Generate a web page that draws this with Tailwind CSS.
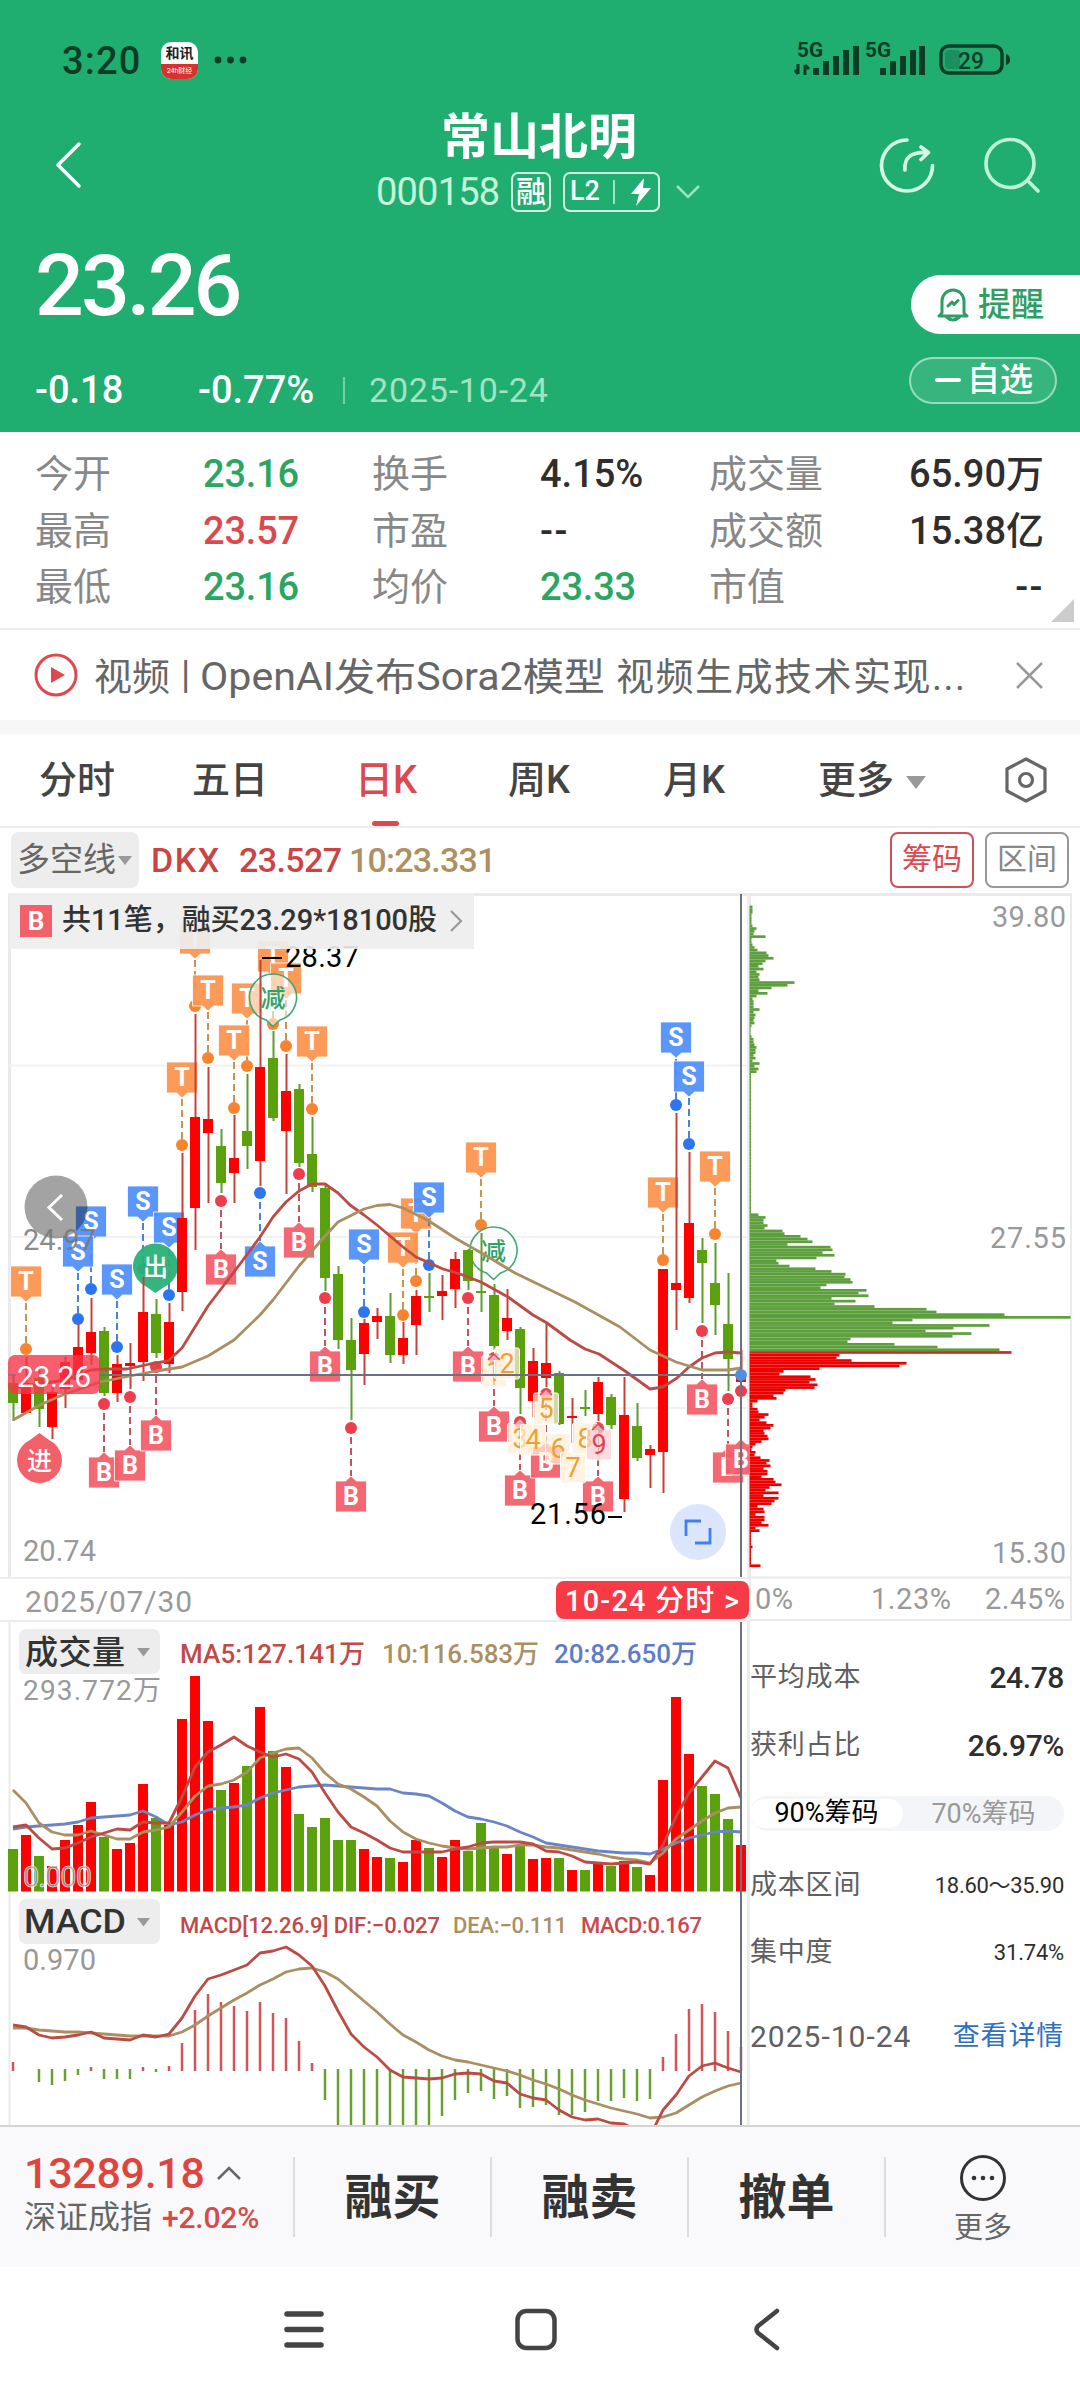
<!DOCTYPE html>
<html lang="zh-CN">
<head>
  <meta charset="UTF-8" />
  <meta name="viewport" content="width=device-width, initial-scale=1" />
  <title>常山北明 000158</title>
  <script src="https://cdn.jsdelivr.net/npm/@tailwindcss/browser@4"></script>
</head>
<body class="w-[1080px] h-[2400px] overflow-hidden bg-white text-[#2e2e2e] font-['Roboto','Noto_Sans_CJK_SC',sans-serif]">
  <!-- Header -->
  <header class="h-[432px] bg-[#20ad70] text-white">
    <div class="h-[111px] pt-[9px] pl-[62px] pr-[68px] flex items-center text-[#0b3d26]">
      <span class="w-[99px] pt-[2px] text-[38px] tracking-[1.200px] font-medium">3:20</span>
      <div class="w-[37px] h-[37px] rounded-[10px] overflow-hidden bg-white flex flex-col items-center">
        <span class="h-[22px] leading-[22px] text-[14px] font-bold text-[#222]">和讯</span>
        <span class="w-full h-[15px] bg-[#d8322f] text-white text-[7px] leading-[14px] text-center">24h财经</span>
      </div>
      <svg class="ml-[15px]" width="36" height="10" fill="#0b3d26"><circle cx="5" cy="5" r="3.4" /><circle cx="17.500" cy="5" r="3.4" /><circle cx="30" cy="5" r="3.4" /></svg>
      <svg class="ml-auto" width="218" height="58" viewBox="795 31 218 58" fill="#0b3d26">
        <g font-family="Roboto" font-weight="700" font-size="20">
          <text x="798" y="57" textLength="26" lengthAdjust="spacingAndGlyphs">5G</text>
          <text x="866" y="57" textLength="26" lengthAdjust="spacingAndGlyphs">5G</text>
        </g>
        <path d="M799 64v10M799 74l-3-4M806 75V65M806 65l4 4" stroke="#0b3d26" stroke-width="3" fill="none" />
        <path d="M814 68h6v7h-6zM824 61h6v14h-6zM834 56h6v19h-6zM844 50h6v25h-6zM854 46h6v29h-6z" />
        <path d="M881 68h6v7h-6zM891 61h6v14h-6zM901 56h6v19h-6zM911 50h6v25h-6zM920 46h6v29h-6z" />
        <rect x="942" y="46" width="61" height="27" rx="8" fill="none" stroke="#0b3d26" stroke-width="3.500" />
        <rect x="946" y="50" width="15" height="19" rx="4" fill="#0b3d26" opacity=".25" />
        <path d="M1007 54q4 1 4 5.500t-4 5.500z" />
        <text x="959" y="68.500" font-family="Roboto" font-weight="500" font-size="24" textLength="26" lengthAdjust="spacingAndGlyphs">29</text>
      </svg>
    </div>

    <div class="h-[104px] pl-[50px] pr-[38px] flex items-center">
      <svg class="mt-1" width="36" height="52" fill="none" stroke="#fff" stroke-width="3.500" stroke-linecap="round" stroke-linejoin="round"><path d="M29 5 8 26l21 21" /></svg>
      <div class="flex-1 pl-[100px] pt-[6px]">
        <h1 class="w-[580px] h-[50px] leading-[48px] pl-[255px] text-[49px] font-bold">常山北明</h1>
        <div class="w-[580px] h-[54px] pl-[190px] pt-[1px] flex items-center">
          <span class="w-[135px] text-[38px] leading-[40px] tracking-[-.8px] text-[#c6f4da]">000158</span>
          <span class="w-[40px] h-[40px] rounded-[7px] border-2 border-white/80 text-[30px] leading-[35px] text-center font-medium">融</span>
          <span class="ml-[12px] w-[97px] h-[40px] rounded-[7px] border-2 border-white/80 flex items-center pl-[5px]">
            <b class="font-medium text-[27px] w-[43px]">L2</b>
            <i class="w-[1.500px] h-[24px] bg-white/60"></i>
            <svg class="ml-[15px]" width="22" height="30" fill="#fff"><path d="M14 1 1 17h8L6 29 21 11h-8z" /></svg>
          </span>
          <svg class="ml-[15px]" width="26" height="16" fill="none" stroke="#9fe0c0" stroke-width="2.500"><path d="m2 2 11 11L24 2" /></svg>
        </div>
      </div>
      <svg class="shrink-0 mt-1" width="166" height="62" viewBox="876 134 166 62" fill="none" stroke="#d5f8e5" stroke-width="3.700" stroke-linecap="round" stroke-linejoin="round">
        <path d="M907 140A25.500 25.500 0 1 0 932.500 165.500" />
        <path d="M905 170c-1-12 5-18 22-17.500M921 147l7.500 5.500-7.500 7" />
        <circle cx="1010" cy="163.500" r="24" stroke="#bdf2d6" />
        <path d="m1029 182 9 9" stroke="#bdf2d6" />
      </svg>
    </div>

    <div class="h-[139px] pl-[35px] flex justify-between items-center">
      <span class="pt-[3px] text-[86px] leading-[100px] font-medium tracking-[-3px]">23.26</span>
      <div class="mt-10 w-[169px] h-[59px] rounded-l-full bg-white text-[#2f9e66] flex items-center pl-[26px]">
        <svg width="32" height="34" fill="none" stroke="#2f9e66" stroke-width="3" stroke-linecap="round" stroke-linejoin="round">
          <path d="M5 25V13a11 11 0 0 1 22 0v12l3 3H2zM10 29.500q6 5 12 0M11 18l4-4 2 2.500 4-4" />
        </svg>
        <span class="ml-[9px] text-[33px] leading-[40px] font-medium">提醒</span>
      </div>
    </div>

    <div class="h-[72px] pl-[35px] pr-[23px] flex items-center">
      <span class="w-[163px] text-[38px] font-medium">-0.18</span>
      <span class="w-[145px] text-[38px] font-medium">-0.77%</span>
      <i class="w-[2px] h-[27px] bg-white/40"></i>
      <span class="ml-[24px] text-[34px] tracking-[.8px] text-[#a3e2c2]">2025-10-24</span>
      <div class="ml-auto -mt-5 w-[148px] h-[47px] rounded-full border-2 border-white/50 bg-white/10 flex items-center pl-[24px]">
        <i class="w-[26px] h-[3.500px] rounded bg-white"></i>
        <span class="ml-[6px] text-[33px] leading-[40px] font-medium">自选</span>
      </div>
    </div>
  </header>

  <!-- Quote figures -->
  <section class="relative h-[198px] pt-[14px] pl-[35px] pr-[36px] border-b-2 border-[#ededed] text-[38px] leading-[56.500px] font-medium">
    <div class="grid grid-cols-[168px_169px_168px_169px_1fr_auto] text-[#888]">
      <span class="font-normal">今开</span><span class="text-[#2aa562] tracking-[-.2px]">23.16</span><span class="font-normal">换手</span><span class="text-[#2e2e2e]">4.15%</span><span class="font-normal">成交量</span><span class="text-[#2e2e2e] text-right">65.90万</span>
      <span class="font-normal">最高</span><span class="text-[#d94a50] tracking-[-.2px]">23.57</span><span class="font-normal">市盈</span><span class="text-[#2e2e2e] tracking-[1.500px]">--</span><span class="font-normal">成交额</span><span class="text-[#2e2e2e] text-right">15.38亿</span>
      <span class="font-normal">最低</span><span class="text-[#2aa562] tracking-[-.2px]">23.16</span><span class="font-normal">均价</span><span class="text-[#2aa562] tracking-[-.2px]">23.33</span><span class="font-normal">市值</span><span class="text-[#2e2e2e] text-right tracking-[1.500px]">--</span>
    </div>
    <svg class="absolute right-[6px] bottom-[6px]" width="23" height="23" fill="#ccc"><path d="M23 0v23H0z" /></svg>
  </section>

  <!-- News -->
  <section class="h-[90px] pl-[34px] pr-[36px] flex items-center">
    <svg width="44" height="44"><circle cx="22" cy="22" r="20" fill="none" stroke="#dc4a50" stroke-width="3" /><path d="M17 14v16l14-8z" fill="#dc4a50" /></svg>
    <svg class="block ml-[16px]" width="890" height="56" fill="#666" font-size="38">
      <text x="0" y="43" textLength="76">视频</text>
      <text x="87" y="41">|</text>
      <text x="106" y="43" textLength="405" lengthAdjust="spacingAndGlyphs">OpenAI发布Sora2模型</text>
      <text x="522" y="43" textLength="349">视频生成技术实现...</text>
    </svg>
    <svg class="ml-auto" width="29" height="29" stroke="#999" stroke-width="2.500"><path d="m2 2 25 25M27 2 2 27" /></svg>
  </section>
  <div class="h-[14px] bg-[#f7f7f7]"></div>

  <!-- Period tabs -->
  <nav class="h-[94px] pl-[39px] pr-[31px] flex items-center border-b-2 border-[#ededed] text-[38px] font-medium text-[#444]">
    <span class="w-[153px]">分时</span>
    <span class="w-[163px]">五日</span>
    <span class="relative w-[153px] h-full leading-[92px] text-[#dc4a50]">日K<i class="absolute left-[17px] bottom-0 w-[27px] h-[5px] rounded bg-[#dc4a50]"></i></span>
    <span class="w-[155px]">周K</span>
    <span class="w-[155px]">月K</span>
    <span>更多</span>
    <svg class="ml-[12px] mt-1" width="20" height="13" fill="#999"><path d="M0 0h20L10 13z" /></svg>
    <svg class="ml-auto" width="46" height="48" fill="none" stroke="#666" stroke-width="3.200" stroke-linejoin="round"><path d="M23 3 42 13v22L23 45 4 35V13z" /><circle cx="23" cy="24" r="6.500" /></svg>
  </nav>

  <!-- Indicator row -->
  <div class="h-[65px] pt-[4px] pl-[11px] pr-[11px] flex text-[34px] leading-[56px]">
    <div class="w-[128px] h-[56px] rounded-[8px] bg-[#ededed] pl-[6px] text-[33px] text-[#666] flex items-center">多空线<svg class="ml-[2px]" width="14" height="9" fill="#999"><path d="M0 0h14L7 9z" /></svg></div>
    <span class="ml-[12px] w-[88px] font-medium tracking-[1.500px] text-[#cb4444]">DKX</span>
    <span class="w-[110px] tracking-[-.6px] font-medium text-[#cb4444]">23.527</span>
    <span class="tracking-[-.8px] font-medium text-[#ae9060]">10:23.331</span>
    <span class="ml-auto w-[84px] h-[56px] rounded-[8px] border-2 border-[#cc5055] text-[#dc4a50] text-[30px] leading-[50px] text-center">筹码</span>
    <span class="ml-[11px] w-[84px] h-[56px] rounded-[8px] border-2 border-[#999] text-[#888] text-[30px] leading-[50px] text-center">区间</span>
  </div>

  <!-- Charts -->
  <main class="h-[1232px] flex overflow-hidden">
    <div class="w-[749px] shrink-0">
      <div class="relative">
        <svg id="price" class="block" width="749" height="684" viewBox="0 893 749 684"></svg>
        <div class="absolute left-[9px] top-0 w-[465px] h-[56px] bg-[#eee]/92 flex items-center pl-[11px]">
          <b class="w-[32px] h-[32px] bg-[#f2606a] text-white text-[26px] leading-[32px] text-center font-bold">B</b>
          <svg class="ml-[10px]" width="376" height="44"><text x="0" y="31" font-size="29" fill="#333" font-weight="500" textLength="375">共11笔，融买23.29*18100股</text></svg>
          <svg class="ml-[11px]" width="14" height="24" fill="none" stroke="#999" stroke-width="2.200"><path d="m2 2 10 10L2 22" /></svg>
        </div>
      </div>
      <div class="h-[45px] border-y-2 border-[#ededed] pl-[25px] flex items-center justify-between">
        <svg width="170" height="40"><text x="0" y="32" font-size="30" fill="#999" textLength="167">2025/07/30</text></svg>
        <div class="w-[193px] h-[38px] rounded-[8px] bg-[#f63b47] pl-[9px]">
          <svg class="block" width="180" height="38"><text x="0" y="30" font-size="29" font-weight="500" fill="#fff" textLength="174">10-24 分时 &gt;</text></svg>
        </div>
      </div>
      <svg id="volume" class="block" width="749" height="272" viewBox="0 1622 749 272"></svg>
      <svg id="macd" class="block" width="749" height="231" viewBox="0 1894 749 231"></svg>
    </div>

    <!-- Chip distribution -->
    <aside class="flex-1 pr-[8px]">
      <svg id="chips" class="block" width="323" height="728" viewBox="749 893 323 728"></svg>
      <div class="h-[504px] pt-[22px] pr-[8px] border-l border-[#eee] text-[27px] tracking-[.8px] text-[#606060]">
        <div class="h-[68px] flex items-center justify-between">平均成本<span class="text-[30px] tracking-[-.4px] text-[#2e2e2e] font-medium">24.78</span></div>
        <div class="h-[68px] flex items-center justify-between">获利占比<span class="text-[30px] tracking-[-.4px] text-[#2e2e2e] font-medium">26.97%</span></div>
        <div class="mt-[17px] h-[35px] rounded-full bg-[#f4f5f8] flex items-center text-[27px] leading-[30px] tracking-normal text-center">
          <span class="w-[153px] h-[29px] rounded-full bg-white text-black leading-[28px]">90%筹码</span>
          <span class="flex-1 text-[#999]">70%筹码</span>
        </div>
        <div class="mt-[20px] h-[68px] flex items-center justify-between">成本区间<span class="text-[22px] tracking-[-.3px] text-[#2e2e2e]">18.60～35.90</span></div>
        <div class="h-[67px] flex items-center justify-between">集中度<span class="text-[22px] tracking-[-.2px] text-[#2e2e2e]">31.74%</span></div>
        <div class="mt-[14px] h-[72px] flex items-center justify-between"><span class="text-[30px] tracking-[1px]">2025-10-24</span><span class="text-[#2f70c0]">查看详情</span></div>
      </div>
    </aside>
  </main>

  <!-- Trade bar -->
  <footer class="h-[142px] border-t-2 border-[#d4d4d6] bg-[#f9f9fb] flex">
    <div class="w-[293px] pl-[24px] pt-[23px]">
      <div class="flex items-center h-[46px] text-[43px] text-[#e0443e] font-medium tracking-[-.3px]">13289.18
        <svg class="ml-[12px]" width="24" height="14" fill="none" stroke="#666" stroke-width="2.500"><path d="m1 13 11-11 11 11" /></svg>
      </div>
      <div class="flex items-center h-[42px] text-[32px] text-[#666]">深证成指<span class="ml-[10px] text-[30px] font-medium tracking-[-.2px] text-[#d84a48]">+2.02%</span></div>
    </div>
    <div class="my-[30px] w-[197px] border-l-2 border-[#dcdcdf] text-[48px] leading-[82px] font-bold text-[#333] text-center">融买</div>
    <div class="my-[30px] w-[197px] border-l-2 border-[#dcdcdf] text-[48px] leading-[82px] font-bold text-[#333] text-center">融卖</div>
    <div class="my-[30px] w-[197px] border-l-2 border-[#dcdcdf] text-[48px] leading-[82px] font-bold text-[#333] text-center">撤单</div>
    <div class="my-[30px] flex-1 border-l-2 border-[#dcdcdf] flex flex-col items-center">
      <svg class="-mt-[4px] shrink-0" width="50" height="50"><circle cx="25" cy="25" r="21.500" fill="none" stroke="#333" stroke-width="3" /><g fill="#333"><circle cx="16" cy="25" r="2.300" /><circle cx="25" cy="25" r="2.300" /><circle cx="34" cy="25" r="2.300" /></g></svg>
      <span class="mt-[3px] text-[29px] leading-[44px] text-[#666]">更多</span>
    </div>
  </footer>

  <!-- System navigation -->
  <div class="h-[133px] pt-[36px]">
    <svg class="block mx-auto" width="520" height="54" viewBox="280 2303 520 54" fill="none" stroke="#444" stroke-linecap="round" stroke-linejoin="round">
      <path d="M287 2314h34M287 2329.500h34M287 2345h34" stroke-width="5.500" />
      <rect x="517.500" y="2311" width="37" height="37" rx="9" stroke-width="4.500" />
      <path d="m777 2311-19 15q-3 3.500 0 7l19 15" stroke-width="4.500" />
    </svg>
  </div>

  <script>
    const RED = '#fe0000', GREEN = '#5ba00d', UP = '#c8403a', DOWN = '#5f9a2c';
    const LINE_RED = '#bd4b45', LINE_TAN = '#ab8f62', LINE_BLUE = '#6a85c6';
    const X = (i) => 13 + 13 * i;

    // colour, high, body top, body bottom, low
    const candles = [
      ['g',1375,1383,1403,1421],['r',1357,1383,1413,1413],['g',1370,1378,1409,1427],['r',1385,1392,1427,1439],['r',1357,1362,1389,1408],
      ['r',1323,1347,1380,1382],['r',1298,1332,1353,1365],['g',1327,1331,1393,1396],['r',1355,1364,1393,1402],['r',1343,1363,1366,1389],
      ['r',1277,1312,1362,1381],['g',1299,1314,1353,1358],['r',1303,1322,1364,1373],['r',1153,1218,1292,1311],['r',1014,1117,1208,1250],
      ['r',1067,1119,1133,1203],['g',1129,1146,1183,1193],['r',1115,1158,1173,1203],['g',1074,1131,1146,1169],['r',960,1067,1161,1186],
      ['g',1031,1058,1118,1121],['r',1054,1091,1131,1194],['g',1084,1089,1163,1167],['g',1117,1154,1187,1192],['g',1183,1188,1278,1291],
      ['g',1266,1274,1340,1349],['g',1318,1340,1370,1420],['r',1319,1323,1354,1385],['r',1308,1316,1322,1339],['g',1293,1316,1355,1363],
      ['r',1322,1338,1355,1364],['r',1290,1296,1325,1355],['g',1273,1296,1298,1312],['r',1275,1291,1296,1320],['r',1252,1259,1289,1308],
      ['g',1249,1250,1281,1290],['g',1233,1291,1293,1312],['g',1284,1295,1346,1350],['r',1289,1318,1331,1340],['g',1327,1329,1388,1414],
      ['r',1348,1361,1401,1417],['r',1322,1363,1378,1387],['g',1371,1373,1424,1425],['r',1398,1416,1418,1443],['g',1390,1407,1409,1416],
      ['r',1377,1382,1414,1421],['g',1394,1397,1425,1429],['r',1377,1415,1499,1512],['g',1403,1426,1458,1461],['r',1445,1449,1455,1488],
      ['r',1269,1269,1452,1493],['r',1113,1283,1290,1330],['r',1152,1223,1298,1303],['g',1238,1250,1263,1323],['g',1243,1283,1305,1335],
      ['g',1273,1324,1359,1391],['r',1350,1375,1382,1382],
    ];

    const line = (pts, color, w = 2.8) =>
      `<polyline points="${pts.map((p) => p.join(',')).join(' ')}" fill="none" stroke="${color}" stroke-width="${w}" stroke-linejoin="round"/>`;
    const series = (ys, color) => line(ys.map((y, i) => [X(i), y]), color);
    const text = (x, y, s, size, fill, len, extra = '') =>
      `<text x="${x}" y="${y}" font-size="${size}" fill="${fill}" textLength="${len}" ${extra}>${s}</text>`;

    const TAG = { T: '#fc9650', S: '#5290fb', B: '#f2606a' };
    const DOT = { T: '#f88430', S: '#2b76f0', B: '#ee3d4c' };

    // tag above its candle, pointing down
    function tagDown(kind, i, top) {
      const x = X(i), dash = kind === 'T' ? '#cf9150' : '#4a83d6';
      return `<path d="M${x} ${top + 37}V${top + 78}" stroke="${dash}" stroke-width="2" stroke-dasharray="7 4"/>
        <circle cx="${x}" cy="${top + 83}" r="6" fill="${DOT[kind]}"/>
        <path d="M${x - 15.5} ${top}h31v31h-10l-5.5 5-5.5-5h-10z" fill="${TAG[kind]}" fill-opacity=".95" stroke="#fff" stroke-opacity=".8"/>
        <text x="${x}" y="${top + 24}" font-size="25" font-weight="700" fill="#fff" text-anchor="middle">${kind}</text>`;
    }
    // tag below its candle, pointing up
    function tagUp(kind, i, dot) {
      const x = X(i), dash = kind === 'B' ? '#bf5560' : '#4a83d6';
      return `<path d="M${x} ${dot + 9}V${dot + 48}" stroke="${dash}" stroke-width="2" stroke-dasharray="7 4"/>
        <circle cx="${x}" cy="${dot}" r="6" fill="${DOT[kind]}"/>
        <path d="M${x - 15.5} ${dot + 84}h31v-31h-10l-5.5-5-5.5 5h-10z" fill="${TAG[kind]}" fill-opacity=".95" stroke="#fff" stroke-opacity=".8"/>
        <text x="${x}" y="${dot + 77}" font-size="25" font-weight="700" fill="#fff" text-anchor="middle">${kind}</text>`;
    }
    function bubble(x, y, s) {
      return `<path d="M${x - 7} ${y + 22.5}A23.5 23.5 0 1 1 ${x + 7} ${y + 22.5}L${x} ${y + 29}z" fill="#fff" fill-opacity=".55" stroke="#3fa873" stroke-width="1.6"/>
        <text x="${x}" y="${y + 9}" font-size="25" fill="#2fa268" font-weight="500" text-anchor="middle">${s}</text>`;
    }
    function count(x, y, s, hot) {
      return `<rect x="${x - 12.5}" y="${y - 15}" width="25" height="31" rx="2" fill="${hot ? '#fbcfd3' : '#fff0da'}" fill-opacity=".72" stroke="#fff"/>
        <text x="${x}" y="${y + 10}" font-size="27" fill="${hot ? '#dc4455' : '#efa033'}" text-anchor="middle">${s}</text>`;
    }

    let p = '<path d="M8 894.500H749M9.500 894V1577" stroke="#eaeaea" stroke-width="3"/><path d="M9 1065.500H749M9 1237H749M9 1408H749" stroke="#f2f2f2" stroke-width="2"/><path d="M748 894V1577" stroke="#eee" stroke-width="2"/>';
    p += [['T',13,1062],['T',14,923],['T',15,975],['T',18,983],['T',17,1025],['T',19,941],['T',21,963],['T',23,1026],['T',1,1266],
      ['S',6,1206],['S',5,1236],['S',8,1264],['S',10,1186],['S',12,1212],['S',27,1229],['T',31,1198],['T',30,1232],['S',32,1182],
      ['T',36,1142],['T',50,1177],['S',51,1022],['S',52,1061],['T',54,1151]].map(([k, i, y]) => k === 'T' && i === 19 ? tagDown(k, 20, y) : tagDown(k, i, y)).join('');
    p += [['B',7,1404],['B',9,1397],['B',11,1367],['B',16,1201],['S',19,1193],['B',22,1174],['B',24,1298],['B',26,1428],['B',35,1298],['B',37,1358],
      ['B',39,1422],['B',41,1394],['B',45,1428],['B',53,1331],['B',55,1399],['B',56,1391]].map(([k, i, y]) => tagUp(k, i, y)).join('');
    p += bubble(273, 997.5, '减') + bubble(493.5, 1250.5, '减');
    p += '<path d="M146 1286.500A22.500 22.500 0 1 1 165 1286.500L155.500 1293z" fill="#2bb077" fill-opacity=".95"/>' + text(143, 1276, '出', 25, '#fff', 25, 'font-weight="500"');
    p += '<path d="M30 1440A22.500 22.500 0 1 0 49 1440L39.500 1433z" fill="#f2606a"/>' + text(27, 1470, '进', 25, '#fff', 25, 'font-weight="500"');
    p += candles.map(([c, hi, top, bot, lo], i) =>
      `<path d="M${X(i) + .5} ${hi}V${lo}" stroke="${c === 'r' ? UP : DOWN}" stroke-width="2"/><rect x="${X(i) - 5}" y="${top}" width="10" height="${bot - top}" fill="${c === 'r' ? RED : GREEN}"/>`).join('');
    p += [[494,1371,'1'],[507,1363,'2'],[520,1438,'3'],[533,1439,'4'],[546,1408,'5'],[558,1448,'6'],[573,1467,'7'],[585,1438,'8']].map((a) => count(...a)).join('') + count(599, 1444, '9', true);
    p += [[494,1355],[520,1419],[546,1390],[598,1425]].map(([x, y]) => `<path d="M${x - 6} ${y + 5}l6-6 6 6" fill="#f4a5ab" stroke="#c45460" stroke-width="1.5"/>`).join('');
    p += line([[13,1388],[39,1384],[65,1380],[91,1370],[108,1369],[127,1369],[150,1364],[168,1361],[182,1348],[195,1327],[208,1306],[221,1289],[240,1264],[260,1237],[273,1217],[286,1202],[299,1191],[312,1184],[325,1184],[338,1193],[350,1205],[364,1215],[377,1225],[403,1247],[416,1257],[443,1269],[460,1274],[481,1282],[508,1297],[533,1315],[547,1323],[570,1340],[585,1349],[599,1354],[625,1371],[650,1389],[663,1387],[677,1378],[689,1367],[702,1358],[715,1353],[728,1352],[741,1353]], LINE_RED);
    p += line([[13,1420],[40,1405],[60,1396],[100,1382],[125,1377],[156,1371],[182,1367],[208,1356],[234,1340],[260,1315],[273,1300],[299,1266],[325,1236],[338,1222],[364,1209],[377,1205.5],[390,1204.5],[403,1208],[429,1221],[455,1238],[485,1255],[515,1273],[575,1302],[620,1327],[650,1350],[676,1362],[702,1370],[728,1370],[741,1368]], LINE_TAN);
    p += '<path d="M262 958h20M608 1517h14" stroke="#000" stroke-width="2"/>' + text(285, 967, '28.37', 29, '#000', 74) + text(530, 1524, '21.56', 29, '#000', 76);
    p += '<circle cx="56" cy="1207" r="31.500" fill="#000" fill-opacity=".36"/><path d="m62 1195-13 12.500 13 12.500" fill="none" stroke="#fff" stroke-width="3"/>';
    p += text(23, 1250, '24.97', 29, '#777', 73, 'fill-opacity=".85"') + text(23, 1561, '20.74', 29, '#999', 73);
    p += '<rect x="8" y="1355" width="92" height="39" rx="7" fill="#f8364a" fill-opacity=".8"/>' + text(17, 1387, '23.26', 30, '#fff', 74);
    p += '<path d="M100 1375H741M741 894V1577" stroke="#6b7180" stroke-width="2"/><path d="M8 1375H16" stroke="#6b7180" stroke-width="1"/><circle cx="741" cy="1375" r="6" fill="#4e90dd"/>';
    p += '<circle cx="698" cy="1532" r="28" fill="#dbe6fd"/><path d="M686 1536v-15h15M710 1528v15h-15" fill="none" stroke="#4080e8" stroke-width="2.800"/>';
    document.getElementById('price').innerHTML = p;

    // volume: tops of the bars, coloured as the candles
    const volTop = [1849,1835,1856,1866,1840,1825,1802,1837,1849,1843,1784,1818,1825,1719,1676,1721,1790,1783,1766,1707,1751,1767,1814,1827,1818,1840,1840,1849,1857,1858,1862,1840,1848,1857,1840,1851,1823,1846,1854,1846,1859,1858,1858,1870,1870,1864,1866,1861,1867,1875,1780,1697,1754,1786,1794,1819,1845];
    let v = '<path d="M9.500 1622V1894M748 1622V1894" stroke="#eaeaea" stroke-width="2"/><rect x="19" y="1629" width="141" height="45" rx="7" fill="#ededed"/><path d="M137 1648h13l-6.500 8.500z" fill="#999"/>';
    v += text(25, 1664, '成交量', 33, '#333', 100, 'font-weight="500"') + text(23, 1700, '293.772万', 28, '#999', 138);
    v += text(180, 1663, 'MA5:127.141万', 26, '#c04a48', 185, 'font-weight="500"') + text(382, 1663, '10:116.583万', 26, '#ab8f62', 157, 'font-weight="500"') + text(554, 1663, '20:82.650万', 26, '#5e7cc6', 143, 'font-weight="500"');
    v += volTop.map((y, i) => `<rect x="${X(i) - 5}" y="${y}" width="10" height="${1891.5 - y}" fill="${candles[i][0] === 'r' ? RED : GREEN}"/>`).join('');
    v += series([1829,1827,1826,1825,1824,1822,1818,1817,1816,1815,1811,1817,1825,1822,1815,1810,1808,1807,1805,1798,1793,1790,1787,1786,1785,1786,1787,1788,1789,1789,1793,1794,1796,1803,1811,1817,1819,1822,1826,1832,1837,1843,1845,1847,1849,1851,1852,1853,1853,1854,1849,1843,1838,1835,1832,1831,1832], LINE_BLUE);
    v += series([1790,1803,1823,1832,1835,1835,1831,1835,1839,1839,1832,1830,1827,1812,1796,1786,1784,1780,1772,1758,1753,1749,1748,1758,1773,1784,1789,1797,1806,1821,1832,1839,1843,1846,1848,1849,1848,1847,1847,1845,1845,1847,1848,1850,1852,1854,1857,1859,1860,1863,1853,1839,1830,1821,1813,1808,1807], LINE_TAN);
    v += series([1827,1825,1838,1849,1848,1843,1837,1833,1829,1830,1822,1823,1823,1797,1767,1752,1745,1737,1746,1752,1757,1754,1759,1772,1793,1812,1827,1833,1840,1848,1852,1852,1852,1852,1849,1847,1843,1842,1842,1842,1844,1851,1852,1856,1862,1863,1864,1863,1862,1864,1845,1817,1793,1777,1761,1768,1798], LINE_RED);
    v += text(23, 1887, '0.000', 29, '#999', 69, 'fill-opacity=".8" stroke="#fff" stroke-width=".6"');
    v += '<path d="M741 1622V1894" stroke="#6b7180" stroke-width="2"/>';
    document.getElementById('volume').innerHTML = v;

    // macd: far end of each stick, 0 for none
    const sticks = [2062,0,2082,2085,2081,2075,2067,2079,2079,2079,2067,2072,2066,2043,2010,1994,2002,2006,2011,2002,2013,2018,2041,2063,2100,2125,2125,2125,2125,2125,2125,2125,2125,2116,2100,2093,2091,2099,2096,2108,2107,2105,2115,2115,2112,2101,2101,2098,2101,2099,2057,2034,2009,2004,2012,2031,2047];
    let m = '<path d="M9.500 1894V2125M748 1894V2125" stroke="#eaeaea" stroke-width="2"/><rect x="19" y="1899" width="141" height="45" rx="7" fill="#ededed"/><path d="M137 1918h13l-6.500 8.500z" fill="#999"/>';
    m += text(24, 1933, 'MACD', 33, '#333', 102, 'font-weight="500" lengthAdjust="spacingAndGlyphs"') + text(23, 1970, '0.970', 29, '#999', 73);
    m += text(180, 1933, 'MACD[12.26.9] DIF:−0.027', 22, '#c04a48', 260, 'font-weight="500"') + text(453, 1933, 'DEA:−0.111', 22, '#ab8f62', 114, 'font-weight="500"') + text(581, 1933, 'MACD:0.167', 22, '#c84a4c', 121, 'font-weight="500"');
    m += sticks.map((y, i) => !y ? '' : `<path d="M${X(i)} ${y < 2070 ? 2071 : 2069}V${y}" stroke="${y < 2070 ? '#d4545a' : '#6aa032'}" stroke-width="2.5"/>`).join('');
    m += series([2028,2028,2030,2031,2032,2032,2033,2034,2035,2036,2036,2036,2036,2032,2025,2016,2008,2000,1993,1985,1979,1972,1969,1968,1972,1979,1990,2001,2012,2024,2035,2042,2050,2056,2060,2062,2065,2068,2071,2075,2080,2084,2089,2095,2100,2104,2108,2111,2114,2118,2117,2113,2105,2097,2091,2086,2083], LINE_TAN);
    m += series([2025,2027,2035,2038,2037,2035,2032,2038,2039,2040,2035,2037,2034,2018,1996,1979,1975,1970,1965,1953,1951,1947,1955,1966,1986,2011,2034,2047,2057,2070,2077,2078,2079,2078,2074,2073,2074,2081,2083,2094,2098,2100,2110,2117,2120,2119,2123,2124,2130,2136,2110,2095,2076,2066,2063,2068,2072], LINE_RED);
    m += '<path d="M741 1894V2125" stroke="#6b7180" stroke-width="2"/>';
    document.getElementById('macd').innerHTML = m;

    // chip histogram, one row per 2.7px of price
    const chips = [3,3,3,2,2,2,2,3,7,5,4,16,2,2,3,5,8,17,19,24,16,13,9,14,7,10,9,10,45,38,22,9,18,7,3,4,4,4,10,4,6,5,4,5,2,1,1,1,2,4,4,5,7,6,6,4,6,3,10,5,9,7,
      ...Array(52).fill(1.5),
      9,16,14,14,18,15,33,35,51,58,63,38,81,83,73,85,67,27,29,40,66,82,96,95,101,103,77,71,117,109,119,82,106,85,125,177,187,255,321,163,143,240,204,176,222,203,101,98,145,188,250,
      262,90,87,102,157,150,70,34,30,61,66,60,68,65,36,34,24,27,8,3,3,8,9,19,15,10,17,24,21,14,15,18,19,12,6,3,2,6,5,11,20,17,21,14,18,18,12,24,26,32,20,16,29,14,29,25,22,8,14,15,6,15,15,12,19,6,10,1.5,1.5,1.5,1.5,1.5,3,1.5,1.5,1.5,1.5,1.5,1.5,11];
    let h = '<path d="M749 894.500H1072" stroke="#eaeaea" stroke-width="3"/><path d="M750 894V1621M1071 894V1621M749 1577.500H1072M749 1620H1072" stroke="#eaeaea" stroke-width="2"/>';
    h += chips.map((w, n) => `<rect x="749.5" y="${(905.6 + n * 2.7).toFixed(1)}" width="${w}" height="2.7" fill="${n < 165 ? '#5d9f3d' : n === 165 ? '#cc2a22' : '#ec0000'}"/>`).join('');
    h += text(992, 927, '39.80', 29, '#999', 74) + text(990, 1248, '27.55', 29, '#999', 76) + text(992, 1563, '15.30', 29, '#999', 74);
    h += text(755, 1609, '0%', 29, '#999', 38) + text(871, 1609, '1.23%', 29, '#999', 80) + text(985, 1609, '2.45%', 29, '#999', 80);
    document.getElementById('chips').innerHTML = h;
  </script>
</body>
</html>
